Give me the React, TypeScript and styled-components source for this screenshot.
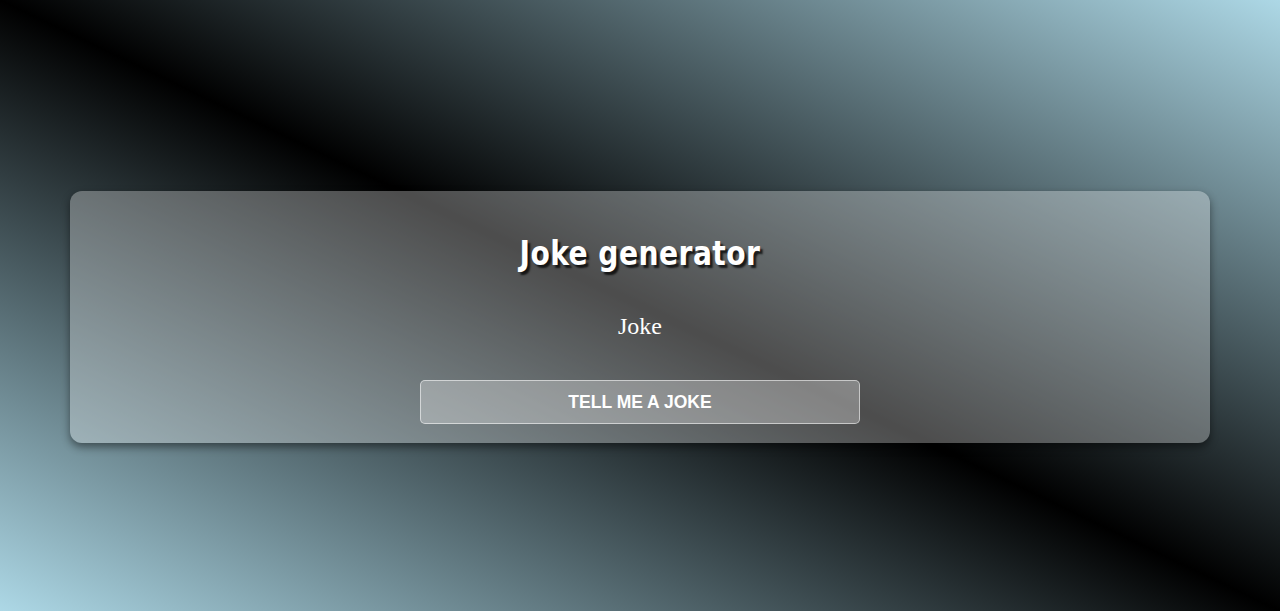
import React from "react";
import styled, { createGlobalStyle } from "styled-components";

const GlobalStyle = createGlobalStyle`
  html, body {
    margin: 0;
    padding: 0;
    height: 100%;
  }
  body {
    font-family: "Liberation Serif", "Times New Roman", serif;
  }
  * { box-sizing: border-box; }
`;

const Page = styled.div`
  min-height: 100vh;
  background: linear-gradient(to top right, #add8e6, #000000, #add8e6);
  display: flex;
  flex-direction: column;
  align-items: center;
  padding-top: 191px;
`;

const Card = styled.div`
  width: 89%;
  padding: 20px 20px 19px;
  border-radius: 12px;
  background: rgba(255, 255, 255, 0.3);
  box-shadow: 0 4px 8px rgba(0, 0, 0, 0.45);
  display: flex;
  flex-direction: column;
  align-items: center;
`;

const Title = styled.h1`
  margin: 22px 0 0;
  height: 40px;
  line-height: 40px;
  font-family: Impact, "DejaVu Sans Condensed", sans-serif;
  font-stretch: condensed;
  font-weight: 900;
  font-size: 34px;
  letter-spacing: 0.5px;
  color: #ffffff;
  text-shadow: 3px 3px 2px rgba(0, 0, 0, 0.75);
  transform: scaleX(0.92);
`;

const JokeText = styled.p`
  margin: 38px 0 0;
  height: 30px;
  line-height: 30px;
  font-family: "Liberation Serif", "Times New Roman", serif;
  font-size: 24px;
  color: #ffffff;
  text-align: center;
`;

const Button = styled.button`
  margin-top: 39px;
  width: 40%;
  height: 44px;
  border: 1px solid rgba(255, 255, 255, 0.55);
  border-radius: 5px;
  background: rgba(255, 255, 255, 0.3);
  color: #ffffff;
  font-family: "Liberation Sans", Arial, sans-serif;
  font-weight: 700;
  font-size: 17.5px;
  text-transform: uppercase;
  cursor: pointer;
`;

export default function App() {
  return (
    <>
      <GlobalStyle />
      <Page>
        <Card>
          <Title>Joke generator</Title>
          <JokeText>Joke</JokeText>
          <Button>Tell me a joke</Button>
        </Card>
      </Page>
    </>
  );
}
